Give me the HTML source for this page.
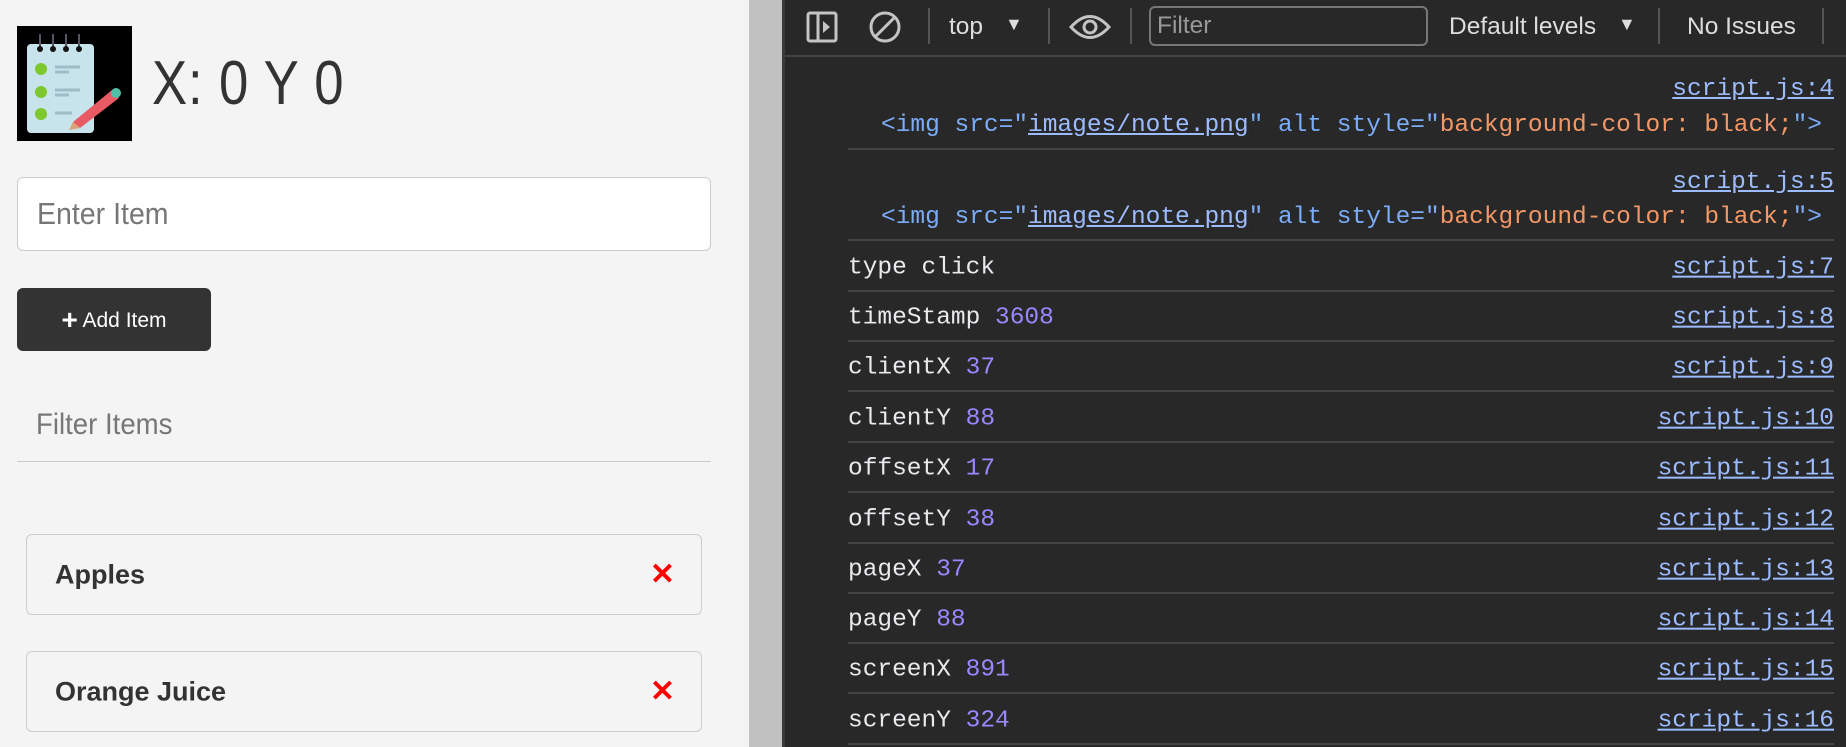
<!DOCTYPE html>
<html><head><meta charset="utf-8"><style>
*{margin:0;padding:0;box-sizing:border-box}
body{width:1846px;height:747px;overflow:hidden;position:relative;background:#282828;font-family:"Liberation Sans",sans-serif}
.left{position:absolute;left:0;top:0;width:749px;height:747px;background:#f4f4f4}
.gbar{position:absolute;left:749px;top:0;width:33px;height:747px;background:#c1c1c1}
.dline{position:absolute;left:782px;top:0;width:3px;height:747px;background:#3a3a3a}
.abs{position:absolute}
.card{position:absolute;left:26px;width:676px;height:81px;border:1px solid #ccc;border-radius:6px;background:#f4f4f4}
.card b{position:absolute;left:28px;top:50%;transform:translateY(-50%);font-size:27px;color:#333;font-weight:bold}
.card i{position:absolute;right:26px;top:50%;transform:translateY(-52%);font-style:normal;color:#f00;font-size:30px;font-weight:bold}
.tb{position:absolute;left:785px;top:0;right:0;height:57px;border-bottom:2px solid #444;background:#282828;color:#ddd;font-size:24.5px}
.sep{position:absolute;top:8px;width:2px;height:36px;background:#555}
.row{position:absolute;left:848px;right:12px;border-bottom:2px solid #444;font-family:"Liberation Mono",monospace;font-size:24.5px;color:#e8eaed}
.row .t{position:absolute;left:0;top:50%;transform:translateY(-42%)}
.lnk{position:absolute;right:0;color:#9cbcff;text-decoration:underline;font-family:"Liberation Mono",monospace;font-size:24.5px}
.n{color:#9b87ff}
.tag{color:#7cacf8}.val{color:#f29766}.u{text-decoration:underline;color:#9cbcff}
</style></head><body>
<div class="left">
 <svg class="abs" style="left:17px;top:26px" width="115" height="115" viewBox="0 0 115 115">
  <rect width="115" height="115" fill="#000"/>
  <rect x="10" y="18" width="67" height="89" rx="4" fill="#c7e4ec"/>
  <g stroke="#556" stroke-width="2"><line x1="23" y1="8" x2="23" y2="22"/><line x1="36" y1="8" x2="36" y2="22"/><line x1="49" y1="8" x2="49" y2="22"/><line x1="62" y1="8" x2="62" y2="22"/></g>
  <g fill="#111"><circle cx="23" cy="23" r="3"/><circle cx="36" cy="23" r="3"/><circle cx="49" cy="23" r="3"/><circle cx="62" cy="23" r="3"/></g>
  <g fill="#7cc82e"><circle cx="24" cy="43" r="6"/><circle cx="24" cy="66" r="6"/><circle cx="24" cy="88" r="6"/></g>
  <g stroke="#9cbcc6" stroke-width="3"><line x1="38" y1="41" x2="63" y2="41"/><line x1="38" y1="46" x2="52" y2="46"/><line x1="38" y1="64" x2="63" y2="64"/><line x1="38" y1="69" x2="52" y2="69"/><line x1="38" y1="87" x2="55" y2="87"/></g>
  <path d="M56 96 L95 64 L102 72 L63 102 Z" fill="#e85a64"/>
  <path d="M56 96 L63 102 L52 104 Z" fill="#d9a07a"/>
  <circle cx="99" cy="67" r="5" fill="#4fc0a8"/>
 </svg>
 <div class="abs" style="left:152px;top:48px;font-size:62px;color:#333;font-weight:300;letter-spacing:1px;transform:scaleX(.85);transform-origin:left">X: 0 Y 0</div>
 <div class="abs" style="left:17px;top:177px;width:694px;height:74px;background:#fff;border:1px solid #ccc;border-radius:6px"></div>
 <div class="abs" style="left:37px;top:196px;font-size:31px;color:#777;transform:scaleX(.92);transform-origin:left">Enter Item</div>
 <div class="abs" style="left:17px;top:288px;width:194px;height:63px;background:#333;border-radius:6px;color:#fff;font-size:21px;line-height:63px;text-align:center"><span style="font-size:28px;font-weight:bold;vertical-align:-2px">+</span> Add Item</div>
 <div class="abs" style="left:36px;top:408px;font-size:30px;color:#777;transform:scaleX(.92);transform-origin:left">Filter Items</div>
 <div class="abs" style="left:17px;top:461px;width:694px;height:1px;background:#ccc"></div>
 <div class="card" style="top:534px"><b>Apples</b><i>✕</i></div>
 <div class="card" style="top:651px"><b>Orange Juice</b><i>✕</i></div>
</div>
<div class="gbar"></div><div class="dline"></div>
<div class="tb">
 <svg class="abs" style="left:21px;top:11px" width="32" height="32" viewBox="0 0 32 32"><rect x="2" y="2" width="28" height="28" rx="2" fill="none" stroke="#c4c4c4" stroke-width="3"/><line x1="12" y1="2" x2="12" y2="30" stroke="#c4c4c4" stroke-width="3"/><path d="M17 10 L24 16 L17 22Z" fill="#c4c4c4"/></svg>
 <svg class="abs" style="left:83px;top:10px" width="34" height="34" viewBox="0 0 34 34"><circle cx="17" cy="17" r="14" fill="none" stroke="#c4c4c4" stroke-width="3"/><line x1="7" y1="27" x2="27" y2="7" stroke="#c4c4c4" stroke-width="3"/></svg>
 <div class="sep" style="left:143px"></div>
 <div class="abs" style="left:164px;top:13px">top</div>
 <div class="abs" style="left:220px;top:14px;font-size:18px">▼</div>
 <div class="sep" style="left:263px"></div>
 <svg class="abs" style="left:284px;top:12px" width="42" height="30" viewBox="0 0 42 30"><path d="M2 15 Q21 -6 40 15 Q21 36 2 15Z" fill="none" stroke="#c4c4c4" stroke-width="3"/><circle cx="21" cy="15" r="6" fill="none" stroke="#c4c4c4" stroke-width="3"/></svg>
 <div class="sep" style="left:345px"></div>
 <div class="abs" style="left:364px;top:6px;width:279px;height:40px;border:2px solid #777;border-radius:6px;color:#999;padding-left:6px;line-height:36px">Filter</div>
 <div class="abs" style="left:664px;top:13px">Default levels</div>
 <div class="abs" style="left:833px;top:14px;font-size:18px">▼</div>
 <div class="sep" style="left:873px"></div>
 <div class="abs" style="left:902px;top:13px">No Issues</div>
 <div class="sep" style="left:1037px"></div>
</div>
<div class="row" style="top:59px;height:91px;left:848px"><span class="lnk" style="top:17px">script.js:4</span><span class="t" style="top:auto;transform:none;left:33px;bottom:9px"><span class="tag">&lt;img src="<span class="u">images/note.png</span>" alt style="</span><span class="val">background-color: black;</span><span class="tag">"&gt;</span></span></div>
<div class="row" style="top:150px;height:91px"><span class="lnk" style="top:19px">script.js:5</span><span class="t" style="top:auto;transform:none;left:33px;bottom:8px"><span class="tag">&lt;img src="<span class="u">images/note.png</span>" alt style="</span><span class="val">background-color: black;</span><span class="tag">"&gt;</span></span></div>
<div class="row" style="top:241px;height:51px"><span class="t">type click</span><span class="lnk t" style="left:auto">script.js:7</span></div>
<div class="row" style="top:292px;height:50px"><span class="t">timeStamp <span class="n">3608</span></span><span class="lnk t" style="left:auto">script.js:8</span></div>
<div class="row" style="top:342px;height:50px"><span class="t">clientX <span class="n">37</span></span><span class="lnk t" style="left:auto">script.js:9</span></div>
<div class="row" style="top:392px;height:51px"><span class="t">clientY <span class="n">88</span></span><span class="lnk t" style="left:auto">script.js:10</span></div>
<div class="row" style="top:443px;height:50px"><span class="t">offsetX <span class="n">17</span></span><span class="lnk t" style="left:auto">script.js:11</span></div>
<div class="row" style="top:493px;height:51px"><span class="t">offsetY <span class="n">38</span></span><span class="lnk t" style="left:auto">script.js:12</span></div>
<div class="row" style="top:544px;height:50px"><span class="t">pageX <span class="n">37</span></span><span class="lnk t" style="left:auto">script.js:13</span></div>
<div class="row" style="top:594px;height:50px"><span class="t">pageY <span class="n">88</span></span><span class="lnk t" style="left:auto">script.js:14</span></div>
<div class="row" style="top:644px;height:50px"><span class="t">screenX <span class="n">891</span></span><span class="lnk t" style="left:auto">script.js:15</span></div>
<div class="row" style="top:694px;height:51px"><span class="t">screenY <span class="n">324</span></span><span class="lnk t" style="left:auto">script.js:16</span></div>
</body></html>
